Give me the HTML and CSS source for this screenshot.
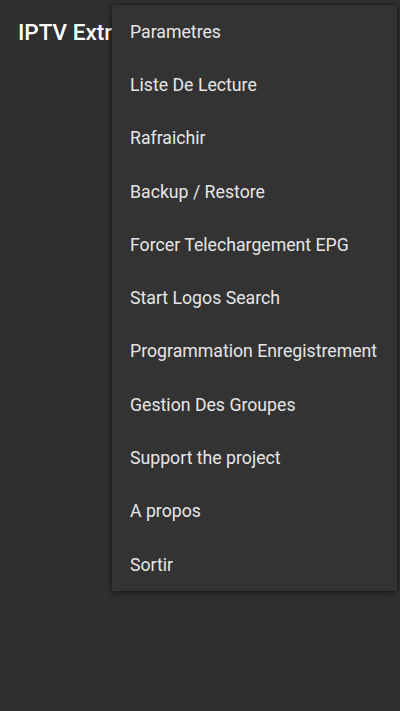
FILE: index.html
```
<!DOCTYPE html>
<html lang="fr">
<head>
<meta charset="utf-8">
<title>IPTV Extreme</title>
<link rel="stylesheet" href="styles.css">
</head>
<body>
<header class="toolbar">
  <h1 class="title">IPTV Extreme</h1>
</header>
<nav class="menu">
  <ul class="menu-list">
    <li class="menu-item">Parametres</li>
    <li class="menu-item">Liste De Lecture</li>
    <li class="menu-item">Rafraichir</li>
    <li class="menu-item">Backup / Restore</li>
    <li class="menu-item">Forcer Telechargement EPG</li>
    <li class="menu-item">Start Logos Search</li>
    <li class="menu-item">Programmation Enregistrement</li>
    <li class="menu-item">Gestion Des Groupes</li>
    <li class="menu-item">Support the project</li>
    <li class="menu-item">A propos</li>
    <li class="menu-item">Sortir</li>
  </ul>
</nav>
</body>
</html>
```
FILE: styles.css
```
html, body {
  margin: 0;
  padding: 0;
}
body {
  width: 400px;
  height: 711px;
  background: #303030;
  font-family: Roboto, "Noto Sans", sans-serif;
  overflow: hidden;
  position: relative;
}
.toolbar {
  height: 64px;
  display: flex;
  align-items: center;
  padding-left: 18px;
}
.title {
  margin: 0;
  width: 94px;
  overflow: hidden;
  font-size: 22.5px;
  line-height: 28px;
  font-weight: 500;
  color: #ffffff;
  white-space: nowrap;
}
.menu {
  position: absolute;
  top: 5px;
  left: 112px;
  width: 285px;
  background: #333333;
  box-shadow: 0 2px 8px rgba(0,0,0,0.45), 0 0 3px rgba(0,0,0,0.3);
}
.menu-list {
  list-style: none;
  margin: 0;
  padding: 0;
}
.menu-item {
  height: 53.3px;
  display: flex;
  align-items: center;
  padding-left: 18px;
  font-size: 17.7px;
  color: #e6e6e6;
  white-space: nowrap;
}
```
